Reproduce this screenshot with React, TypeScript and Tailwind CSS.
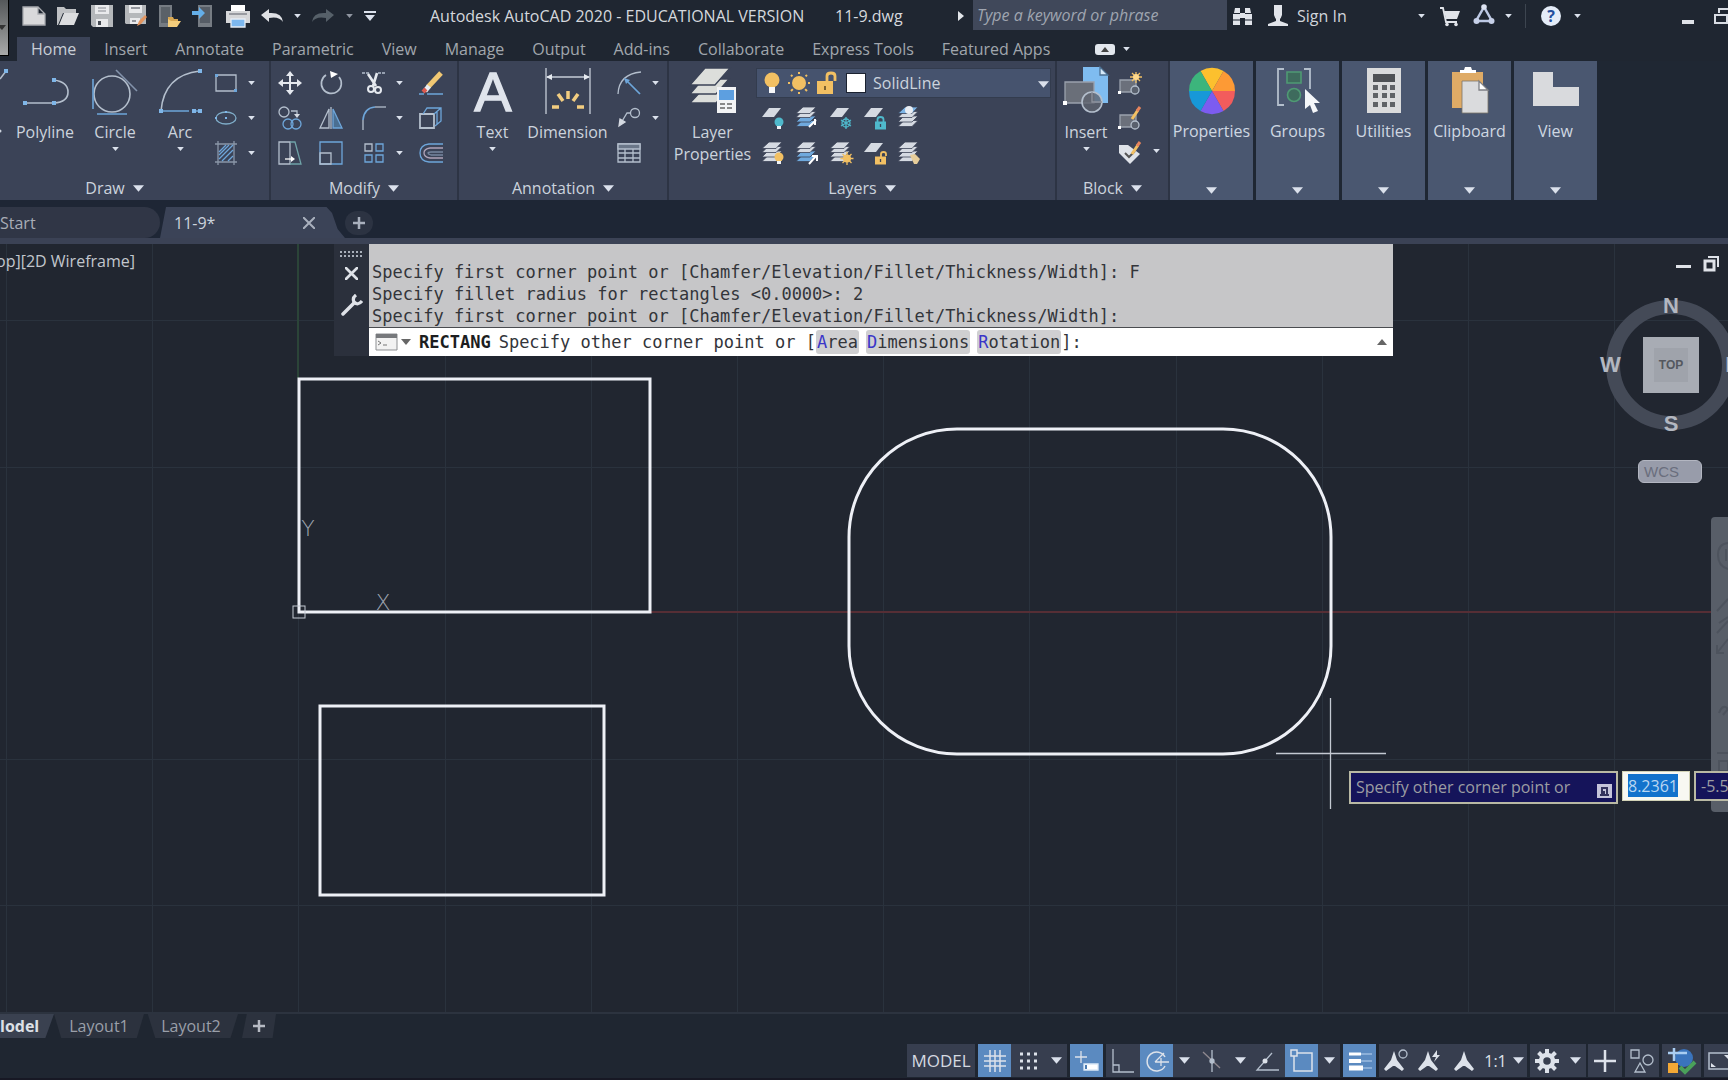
import type { ReactNode } from 'react';
import { clsx } from 'clsx';

const LINE = '#b4bfcd';
const BLUE = '#6ea6da';
const PALE = '#d5dae2';
const GOLD = '#f2c063';
const TEAL = '#4fb9cc';

function Caret({ big }: { big?: boolean }) {
    return (
        <svg viewBox="0 0 10 6" className={clsx('shrink-0', big ? 'w-[11px] h-[7px]' : 'w-[7px] h-[4px]')}>
            <path d="M0 0H10L5 6Z" fill="#dbe1ec" />
        </svg>
    );
}

function Icon({ children, size = 24 }: { children: ReactNode; size?: number }) {
    return (
        <svg
            viewBox={`0 0 ${size} ${size}`}
            width={size}
            height={size}
            fill="none"
            stroke={LINE}
            strokeWidth="1.3"
            className="shrink-0 overflow-visible"
        >
            {children}
        </svg>
    );
}

function IconButton({ label, className, children }: { label: string; className?: string; children: ReactNode }) {
    return (
        <button aria-label={label} className={clsx('flex items-center justify-center shrink-0', className)}>
            {children}
        </button>
    );
}

/* Stack of layer sheets, shared by the layer tools */
function Sheets({ top = PALE, bottom = PALE }: { top?: string; bottom?: string }) {
    return (
        <g stroke="#3b4357" strokeWidth="0.8">
            <path d="M1 20.500L7 14.500H21L15 20.500Z" fill={bottom} />
            <path d="M1 16L7 10H21L15 16Z" fill={bottom} />
            <path d="M1 11.500L7 5.500H21L15 11.500Z" fill={PALE} />
            <path d="M1 7.500L8 1H21L15 7.500Z" fill={top} />
        </g>
    );
}

const SingleSheet = () => <path d="M1 11L8 2H20L13 11Z" fill={PALE} stroke="none" />;

const Bulb = ({ color = GOLD }: { color?: string }) => (
    <g stroke="none">
        <circle cx="18" cy="16" r="4.500" fill={color} />
        <rect x="16" y="20" width="4" height="3" fill="#eef1f5" />
    </g>
);

const Padlock = ({ color, open }: { color: string; open?: boolean }) => (
    <g>
        <path d={open ? 'M18 16V13Q18 11 20.500 11T23 13V15' : 'M14.500 16V13.500Q14.500 11 17.500 11T20.500 13.500V16'} stroke={color} strokeWidth="1.800" />
        <rect x="12" y="15.500" width="11" height="8" fill={color} stroke="none" />
        <path d="M17.500 18V21" stroke="#3b4357" />
    </g>
);

const Sun = () => (
    <g>
        <path d="M18 11V24M11.500 17.500H24.500M13.500 13L22.500 22M22.500 13L13.500 22" stroke={GOLD} />
        <circle cx="18" cy="17.500" r="4" fill={GOLD} stroke="none" />
    </g>
);

const Pencil = () => (
    <g strokeWidth="3">
        <path d="M14 13L20 4" stroke={GOLD} />
        <path d="M19 5L22 1" stroke="#e8845c" />
    </g>
);

/* ---- Title bar ---- */

const quickAccess: { label: string; icon: ReactNode }[] = [
    { label: 'New', icon: <path d="M1 3H16L23 10V21H1Z M16 3V10H23" fill="#d9d9db" stroke="#a9abb0" /> },
    {
        label: 'Open',
        icon: (
            <g stroke="none">
                <path d="M1 3H8L10 5H20V9H7L2 21H1Z" fill="#bfc1c4" />
                <path d="M8 9H23L18 21H3Z" fill="#dcdddf" />
            </g>
        ),
    },
    {
        label: 'Save',
        icon: (
            <g stroke="none">
                <path d="M1 1H23V23H3L1 21Z" fill="#b5b8bb" />
                <path d="M5 1H19V10H5ZM6 15H18V23H6Z" fill="#e9eaec" />
                <path d="M8 4H16M8 7H16" stroke="#a8abb0" />
                <path d="M8 17H11V21H8Z" fill="#454a52" />
            </g>
        ),
    },
    {
        label: 'Save As',
        icon: (
            <g stroke="none">
                <path d="M1 1H22V20H2L1 19Z" fill="#b5b8bb" />
                <path d="M5 1H18V9H5ZM6 14H16V20H6Z" fill="#e9eaec" />
                <path d="M7 4H16M8 17H12" stroke="#777b82" />
                <path d="M13 22L15 17L21 11L23 13L17 20Z" fill="#e3955f" />
            </g>
        ),
    },
    {
        label: 'Open from Web & Mobile',
        icon: (
            <g stroke="none">
                <path d="M1 1H14V23H1Z" fill="#767c83" />
                <path d="M3 3H12V19H3Z" fill="#5a6168" />
                <path d="M10 13H15L16 15H20V17H10Z" fill="#d9a852" />
                <path d="M13 17H23L19 23H10V15Z" fill="#f4cd7c" />
            </g>
        ),
    },
    {
        label: 'Save to Web & Mobile',
        icon: (
            <g stroke="none">
                <path d="M6 1H20V23H6Z" fill="#767c83" />
                <path d="M8 3H18V19H8Z" fill="#565d66" />
                <path d="M0 7H7V3L13 9L7 15V11H0Z" fill="#64aee8" />
            </g>
        ),
    },
    {
        label: 'Plot',
        icon: (
            <g stroke="none">
                <path d="M5 1H19V7H5Z" fill="#fff" />
                <path d="M0 7H24V19H0Z" fill="#d6d7d9" />
                <path d="M3 10H21" stroke="#777b82" />
                <path d="M5 15H19V23H5Z" fill="#7db8ef" stroke="#e6edf5" />
            </g>
        ),
    },
];

function TitleBar() {
    return (
        <div className="flex items-center h-[31px]">
            <div className="flex items-center pl-2 shrink-0">
                {quickAccess.map((q) => (
                    <IconButton key={q.label} label={q.label} className="w-[34px] h-7">
                        <Icon>{q.icon}</Icon>
                    </IconButton>
                ))}
                <IconButton label="Undo" className="w-[34px]">
                    <Icon><path d="M1 11L9 5V9Q22 8 23 18Q19 12 9 14V18Z" fill="#dfe1e5" stroke="none" /></Icon>
                </IconButton>
                <IconButton label="Undo history" className="w-4 h-7"><Caret /></IconButton>
                <IconButton label="Redo" className="w-9">
                    <Icon><path d="M23 11L15 5V9Q2 8 1 18Q5 12 15 14V18Z" fill="#566069" stroke="none" /></Icon>
                </IconButton>
                <IconButton label="Redo history" className="w-4 h-7 opacity-60"><Caret /></IconButton>
                <IconButton label="Customize" className="w-[26px]">
                    <svg viewBox="0 0 12 10" className="w-3 h-[10px]"><path d="M0 0H12V2H0ZM1 4H11L6 10Z" fill="#dbe1ec" /></svg>
                </IconButton>
            </div>
            <h1 className="flex ml-[47px] w-[524px] shrink-0 text-[#d5d8dd]">
                <span className="w-[405px]">Autodesk AutoCAD 2020 - EDUCATIONAL VERSION</span>
                <span>11-9.dwg</span>
            </h1>
            <div className="w-[19px] shrink-0 pl-1">
                <svg viewBox="0 0 6 10" className="w-[6px] h-[10px]"><path d="M0 0L6 5L0 10Z" fill="#e2e5ea" /></svg>
            </div>
            <input
                aria-label="Search"
                placeholder="Type a keyword or phrase"
                className="w-[254px] h-[30px] self-start shrink-0 px-1 bg-[#40485a] text-base italic placeholder:text-[#9fa5b0]"
            />
            <IconButton label="Find" className="w-8">
                <Icon>
                    <path d="M2 10H9V21H2ZM14 10H21V21H14ZM4 4H9V9H3ZM14 4H19L20 9H14ZM9 9H14V14H9Z" fill="#e1e4ea" stroke="none" />
                    <path d="M2 16H9M14 16H21" stroke="#59606b" />
                </Icon>
            </IconButton>
            <button className="flex items-center w-[152px] shrink-0 text-[#d0d4db]">
                <span className="w-[38px] flex justify-center">
                    <Icon>
                        <path d="M8 1H16V11Q15 14 14 15V17L22 20V22H2V20L10 17V15Q9 14 8 11Z" fill="#e1e4ea" stroke="none" />
                    </Icon>
                </span>
                Sign In
            </button>
            <IconButton label="Account" className="w-5 h-7"><Caret /></IconButton>
            <IconButton label="App Store" className="w-[38px]">
                <Icon>
                    <path d="M6 7H22L19 15H8Z" fill="#e1e4ea" stroke="none" />
                    <path d="M2 4H5L8 18H19" stroke="#e1e4ea" strokeWidth="1.800" />
                    <circle cx="9" cy="20.500" r="1.800" fill="#e1e4ea" stroke="none" />
                    <circle cx="18" cy="20.500" r="1.800" fill="#e1e4ea" stroke="none" />
                </Icon>
            </IconButton>
            <IconButton label="Stay Connected" className="w-[30px]">
                <Icon>
                    <g transform="translate(0 -2)">
                        <path d="M12 5L4 19H20Z" stroke="#bcc8e4" strokeWidth="2.500" />
                        <circle cx="12" cy="5" r="2.800" fill="#dde3f2" stroke="none" />
                        <circle cx="4.500" cy="19" r="3" fill="#c6d0e8" stroke="none" />
                        <circle cx="19.500" cy="19" r="3" fill="#c6d0e8" stroke="none" />
                    </g>
                </Icon>
            </IconButton>
            <IconButton label="Connect options" className="w-[18px] h-7"><Caret /></IconButton>
            <div className="w-px h-6 mx-2 shrink-0 bg-[#3d4550]" />
            <IconButton label="Help" className="w-[34px]">
                <span className="flex items-center justify-center size-5 rounded-full bg-[#e4ecf8] text-[#244f9e] text-base leading-5 font-bold">?</span>
            </IconButton>
            <IconButton label="Help options" className="w-[18px] h-7"><Caret /></IconButton>
            <div className="flex items-center ml-auto">
                <IconButton label="Minimize" className="w-[50px] h-7">
                    <span className="w-3 h-1 mt-3 bg-[#dfe2e8]" />
                </IconButton>
                <button aria-label="Restore" className="flex items-center w-[15px] h-7 shrink-0 overflow-hidden">
                    <svg viewBox="0 0 20 18" width="20" height="18" fill="none" stroke="#d8dce3" strokeWidth="2" className="shrink-0">
                        <path d="M2 8H14V16H2ZM6 6V2H19V11H15" />
                    </svg>
                </button>
            </div>
        </div>
    );
}

const ribbonTabs = [
    'Home', 'Insert', 'Annotate', 'Parametric', 'View', 'Manage', 'Output',
    'Add-ins', 'Collaborate', 'Express Tools', 'Featured Apps',
];

function Header() {
    return (
        <header className="flex">
            <button aria-label="Application menu" className="w-[9px] h-14 shrink-0 flex items-center bg-linear-to-b from-[#55585a] to-[#a9aaa9] border-r border-b border-black">
                <svg viewBox="0 0 6 5" className="w-[6px] h-[5px]"><path d="M0 0H6L2 5L0 3Z" fill="#333" /></svg>
            </button>
            <div className="flex-1 min-w-0">
                <TitleBar />
                <nav className="flex h-6 mt-[6px] pl-2">
                    {ribbonTabs.map((tab, i) => (
                        <button
                            key={tab}
                            className={clsx(
                                'px-[14px] leading-6 whitespace-nowrap',
                                i === 0 ? 'bg-[#3b4357] text-[#c9ced6]' : 'text-[#a1a6ad]',
                            )}
                        >
                            {tab}
                        </button>
                    ))}
                    <button aria-label="Minimize ribbon" className="flex items-center gap-2 ml-[31px]">
                        <span className="flex items-center justify-center w-5 h-[11px] rounded-[3px] bg-[#e3e7ee]">
                            <svg viewBox="0 0 8 5" className="w-2 h-[5px]"><path d="M0 5H8L4 0Z" fill="#444" /></svg>
                        </span>
                        <Caret />
                    </button>
                </nav>
            </div>
        </header>
    );
}

/* ---- Ribbon ---- */

function Panel({ title, className, titleClass, children }: { title: string; className: string; titleClass?: string; children: ReactNode }) {
    return (
        <section className={clsx('flex flex-col shrink-0 h-[139px] bg-[#3b4357] border-r-2 border-[#2d3444]', className)}>
            <div className="flex h-[113px]">{children}</div>
            <button className={clsx('flex items-center justify-center gap-2 h-[26px] pt-[2px] text-[#ccd3dd]', titleClass)}>
                {title}
                <Caret big />
            </button>
        </section>
    );
}

function BigButton({ label, className, menu, icon }: { label: string; className: string; menu?: boolean; icon: ReactNode }) {
    return (
        <button className={clsx('flex flex-col items-center shrink-0 pt-[6px] text-[#ccd3dd]', className)}>
            <Icon size={48}>{icon}</Icon>
            <span className="mt-[6px] leading-[22px]">{label}</span>
            {menu && <span className="flex items-center h-3"><Caret /></span>}
        </button>
    );
}

/* Column of three small tools */
function Tools({ className, items }: { className: string; items: [string, ReactNode][] }) {
    return (
        <div className={clsx('flex flex-col shrink-0 pt-[4px]', className)}>
            {items.map(([label, icon]) => (
                <IconButton key={label} label={label} className="h-[35px] w-full">
                    {icon}
                </IconButton>
            ))}
        </div>
    );
}

const dot = (x: number, y: number) => <rect x={x - 2} y={y - 2} width="4" height="4" fill="#7fb6e8" stroke="none" />;

function DrawPanel() {
    return (
        <Panel title="Draw" className="w-[271px]" titleClass="pr-10">
            <button aria-label="Line" className="w-[10px] shrink-0 pt-[6px] flex items-start overflow-hidden">
                <svg viewBox="0 0 10 70" width="10" height="70" fill="none">
                    <path d="M0 12L6 4" stroke={LINE} strokeWidth="1.500" />
                    {dot(6, 4)}
                    <circle cx="0" cy="64" r="1.500" fill="#ccd3dd" />
                </svg>
            </button>
            <BigButton label="Polyline" className="w-[70px]" icon={
                <>
                    <path d="M4 36H33Q47 35 47 25T33 13" strokeWidth="1.600" />
                    {dot(4, 36)}{dot(33, 36)}{dot(33, 13)}
                </>
            } />
            <BigButton label="Circle" className="w-[70px]" menu icon={
                <>
                    <circle cx="21" cy="27" r="18" strokeWidth="1.600" />
                    <path d="M2 12V42M6 47H36" stroke={BLUE} strokeWidth="1.600" />
                    <path d="M25 3L46 24" stroke="#8393ab" strokeWidth="1.600" />
                </>
            } />
            <BigButton label="Arc" className="w-[60px]" menu icon={
                <>
                    <path d="M5 44Q8 8 44 4" strokeWidth="1.600" />
                    <path d="M5 44H44" stroke={BLUE} strokeDasharray="28 3" />
                    {dot(5, 44)}{dot(44, 4)}{dot(44, 44)}{dot(38, 44)}
                </>
            } />
            <Tools className="w-[31px]" items={[
                ['Rectangle', <Icon><path d="M2 4H22V20H2Z" /><path d="M1 3H4V6H1ZM20 18H23V21H20Z" fill={BLUE} stroke="none" /></Icon>],
                ['Ellipse', <Icon><ellipse cx="12" cy="12" rx="10" ry="6" stroke="#7fadc9" /><path d="M11 5H13V7H11ZM11 11H13V13H11ZM1 11H3V13H1Z" fill="#7fb6e8" stroke="none" /></Icon>],
                ['Hatch', <Icon><path d="M4 0V24M20 0V24M1 3H23M1 21H23" stroke="#8a96a8" /><path d="M5 11L12 4M5 18L19 4M8 20L19 9M14 20L19 15M5 14L15 4" stroke={BLUE} /></Icon>],
            ]} />
            <Tools className="w-[20px]" items={[['Rectangle menu', <Caret />], ['Ellipse menu', <Caret />], ['Hatch menu', <Caret />]]} />
        </Panel>
    );
}

function ModifyPanel() {
    return (
        <Panel title="Modify" className="w-[188px]">
            <Tools className="w-[38px]" items={[
                ['Move', <Icon>
                    <path d="M12 3V21M3 12H21" stroke="#e5e9ef" strokeWidth="2" />
                    <path d="M12 0L16 5H8ZM12 24L16 19H8ZM0 12L5 8V16ZM24 12L19 8V16Z" fill="#e5e9ef" stroke="none" />
                </Icon>],
                ['Copy', <Icon>
                    <circle cx="6" cy="6" r="5" />
                    <path d="M13 5H19V9" /><path d="M16 8H22L19 12Z" fill={PALE} stroke="none" />
                    <circle cx="10" cy="18" r="5" stroke={BLUE} /><circle cx="18" cy="18" r="5" stroke={BLUE} />
                </Icon>],
                ['Stretch', <Icon>
                    <path d="M1 1H12V23H1Z" /><path d="M12 1H17L23 23H12" stroke="#6fa3a8" />
                    <path d="M7 18H14" stroke="#fff" /><path d="M13 15L17 18L13 21Z" fill="#fff" stroke="none" />
                </Icon>],
            ]} />
            <Tools className="w-[44px]" items={[
                ['Rotate', <Icon>
                    <path d="M7 4A10 10 0 1 0 20 6" strokeWidth="1.700" /><path d="M11 0L19 3L12 7Z" fill="#fff" stroke="none" />
                </Icon>],
                ['Mirror', <Icon>
                    <path d="M10 3L1 22H10Z" /><path d="M14 3L23 22H14Z" stroke={BLUE} fill="#4a6f92" /><path d="M12 1V23" />
                </Icon>],
                ['Scale', <Icon><path d="M1 1H23V23H1Z" stroke={BLUE} /><path d="M1 12H12V23H1Z" /></Icon>],
            ]} />
            <Tools className="w-[41px]" items={[
                ['Trim', <Icon>
                    <path d="M0 2H7M16 2H23" strokeDasharray="3 1" /><path d="M6 3L14 15M15 2L11 15" stroke="#e5e9ef" strokeWidth="2.600" />
                    <circle cx="9" cy="18" r="3" stroke="#e5e9ef" strokeWidth="2" /><circle cx="16" cy="19" r="3" stroke="#e5e9ef" strokeWidth="2" />
                </Icon>],
                ['Fillet', <Icon><path d="M1 24V14" /><path d="M1 14Q2 2 13 1" stroke={BLUE} strokeWidth="1.700" /><path d="M13 1H24" /></Icon>],
                ['Array', <Icon>
                    <path d="M3 3H10V10H3Z" />
                    <path d="M14 3H21V10H14ZM3 14H10V21H3ZM14 14H21V21H14Z" stroke={BLUE} />
                </Icon>],
            ]} />
            <Tools className="w-[11px]" items={[['Trim menu', <Caret />], ['Fillet menu', <Caret />], ['Array menu', <Caret />]]} />
            <Tools className="w-[51px]" items={[
                ['Erase', <Icon>
                    <path d="M9 16L22 2" stroke="#f1c873" strokeWidth="5" /><path d="M6 20L10 15" stroke="#e9edf1" strokeWidth="5" />
                    <path d="M4 21L7 18" stroke="#dc5a4f" strokeWidth="4" /><path d="M0 23H24" stroke={BLUE} strokeDasharray="5 3 16" />
                </Icon>],
                ['Explode', <Icon>
                    <path d="M1 8H15V22H1Z" strokeWidth="1.800" /><path d="M4 8L8 2H22V15L16 20M15 8L22 2M18 6V18" stroke={BLUE} />
                </Icon>],
                ['Offset', <Icon>
                    <path d="M24 3H10Q1 4 1 12T10 21H24" stroke={BLUE} /><path d="M24 7H11Q5 8 5 12T11 17H24" stroke="#b0a3b8" /><path d="M24 11H12Q9 11 9 12T12 14H24" stroke="#7787a0" />
                </Icon>],
            ]} />
        </Panel>
    );
}

function AnnotationPanel() {
    return (
        <Panel title="Annotation" className="w-[210px]">
            <BigButton label="Text" className="w-[67px]" menu icon={
                <text x="24" y="44" textAnchor="middle" fontSize="56" fontFamily="Liberation Sans" fill="#dfe4ec" stroke="#dfe4ec">A</text>
            } />
            <BigButton label="Dimension" className="w-[83px]" icon={
                <>
                    <path d="M2 1V47M46 1V47M3 10H45" stroke="#c6cdd8" />
                    <path d="M2 10L8 7V13ZM46 10L40 7V13Z" fill="#e5e9ef" stroke="none" />
                    <path d="M24 24V32M14 27L19 34M34 27L29 34M8 40H15M33 40H40" stroke="#f2cd80" strokeWidth="3.500" />
                </>
            } />
            <Tools className="w-[40px]" items={[
                ['Radius', <Icon><path d="M1 23Q2 3 24 1" /><path d="M9 9L23 23" stroke={BLUE} strokeWidth="1.700" /><path d="M7 7L13 9L9 13Z" fill={BLUE} stroke="none" /></Icon>],
                ['Leader', <Icon><circle cx="18" cy="7" r="4.500" /><path d="M13 7H10L4 17" /><path d="M2 20L3 13L8 16Z" fill={PALE} stroke={PALE} /></Icon>],
                ['Table', <Icon>
                    <path d="M1 3H23V21H1ZM1 12H23M1 17H23M8 8V21M16 8V21" /><path d="M1 3H23V8H1Z" fill="#6b7789" />
                </Icon>],
            ]} />
            <div className="flex flex-col w-3 pt-[4px]">
                <IconButton label="Radius menu" className="h-[35px]"><Caret /></IconButton>
                <IconButton label="Leader menu" className="h-[35px]"><Caret /></IconButton>
            </div>
        </Panel>
    );
}

const layerTools: [string, ReactNode][] = [
    ['Layer Off', <><SingleSheet /><Bulb color={TEAL} /></>],
    ['Isolate', <><Sheets bottom="#6fa9dd" /><path d="M14 21L21 14M20 13V19" stroke="#fff" strokeWidth="2" /></>],
    ['Freeze', <><SingleSheet /><path d="M17 11V23M12 14L22 20M22 14L12 20" stroke={TEAL} /><circle cx="17" cy="17" r="4" stroke={TEAL} /></>],
    ['Lock', <><SingleSheet /><Padlock color={TEAL} /></>],
    ['Make Current', <><Sheets top="#7db5e6" /><circle cx="12" cy="4" r="4" fill="#e9edf3" stroke="none" /></>],
    ['Turn All On', <><Sheets /><Bulb /></>],
    ['Unisolate', <><Sheets bottom="#6fa9dd" /><path d="M14 23L21 15M17 15H22V20" stroke="#fff" strokeWidth="2" /></>],
    ['Thaw All', <><Sheets /><Sun /></>],
    ['Unlock', <><SingleSheet /><Padlock color={GOLD} open /></>],
    ['Match Layer', <><Sheets /><path d="M13 14L18 13L23 18L20 23H17Z" fill="#e6cd9a" stroke="none" /></>],
];

function LayersPanel() {
    return (
        <Panel title="Layers" className="w-[388px]">
            <button className="flex flex-col items-center w-[87px] shrink-0 pt-[6px] leading-[22px] text-[#ccd3dd]">
                <Icon size={48}>
                    <g stroke="#3b4357">
                        <path d="M1 36L14 22H40L27 36Z" fill="#dcdedb" />
                        <path d="M1 27L14 12H40L27 27Z" fill="#dcdedb" />
                        <path d="M1 18L16 1H41L26 18Z" fill="#dcdedb" />
                    </g>
                    <path d="M28 20H47V46H28Z" fill="#f2f3f5" stroke="none" />
                    <path d="M30 23H45V33H30Z" fill="#5d9fe0" stroke="none" />
                    <path d="M31 37H44M31 41H44" stroke="#666" strokeDasharray="5 2" />
                </Icon>
                <span className="mt-[6px]">Layer</span>
                <span>Properties</span>
            </button>
            <div className="flex-1 pt-[7px]">
                <div className="relative flex items-center w-[295px] h-[30px] bg-[#46536e] border border-[#333c4e]">
                    <Icon size={28}>
                        <circle cx="15" cy="11" r="7.500" fill={GOLD} stroke="none" /><path d="M12 18H18V24H12Z" fill="#f6f7f9" stroke="none" />
                    </Icon>
                    <Icon size={28}>
                        <circle cx="14" cy="14" r="7" fill={GOLD} stroke="none" />
                        <path d="M14 3V25M3 14H25M6 6L22 22M22 6L6 22" stroke={GOLD} strokeWidth="2" strokeDasharray="2 18 3" />
                    </Icon>
                    <Icon size={28}>
                        <path d="M14 14V7Q14 4 18 4T22 7V12" stroke={GOLD} strokeWidth="2.800" />
                        <path d="M4 12H20V25H4Z" fill={GOLD} stroke="none" /><path d="M12 17V21" stroke="#7d6230" strokeWidth="2" />
                    </Icon>
                    <span className="size-5 ml-[5px] mr-[7px] bg-white border border-[#1b2230]" />
                    <select aria-label="Layer" className="flex-1 h-7 appearance-none bg-transparent text-[#ccd3dd]">
                        <option>SolidLine</option>
                    </select>
                    <span className="absolute right-px top-3 pointer-events-none flex"><Caret big /></span>
                </div>
                <div className="grid grid-cols-[repeat(5,34px)] pt-[2px]">
                    {layerTools.map(([label, icon]) => (
                        <IconButton key={label} label={label} className="h-[35px]">
                            <Icon>{icon}</Icon>
                        </IconButton>
                    ))}
                </div>
            </div>
        </Panel>
    );
}

const BlockBase = () => (
    <>
        <path d="M2 9H18V21H2Z" fill="#6b707b" stroke="#9aa1ad" />
        <circle cx="17" cy="19" r="4" fill="#59606d" />
        <rect x="0" y="20" width="3" height="3" fill="#fff" stroke="none" />
    </>
);

function BlockPanel() {
    return (
        <Panel title="Block" className="w-[113px]">
            <BigButton label="Insert" className="w-[58px]" menu icon={
                <>
                    <path d="M21 0H38L46 8V36H21Z" fill="#7fbcf0" stroke="none" /><path d="M38 0V8H46Z" fill="#d6eafa" stroke="#4b6f91" />
                    <path d="M3 15H32V36H3Z" fill="#6a6f79" stroke="#9aa1ad" />
                    <circle cx="30" cy="35" r="10" fill="#5f646f" fillOpacity="0.800" strokeWidth="1.600" /><path d="M30 25V35H40" stroke="#8e939d" />
                    <rect x="1" y="34" width="4" height="4" fill="#fff" stroke="none" />
                </>
            } />
            <Tools className="w-[29px]" items={[
                ['Create Block', <Icon><BlockBase /><path d="M18 1V12M12 6H24M14 2L22 10M22 2L14 10" stroke={GOLD} /><circle cx="18" cy="6" r="3" fill="#ffd98c" stroke="none" /></Icon>],
                ['Edit Block', <Icon><BlockBase /><Pencil /></Icon>],
                ['Edit Attributes', <Icon><path d="M1 4H10L22 13L12 23L1 12Z" fill="#dfe3e9" stroke="none" /><path d="M7 12L11 16L17 10" stroke="#555" strokeWidth="2" /><Pencil /></Icon>],
            ]} />
            <div className="flex items-end w-[24px] pb-[17px]">
                <IconButton label="Attributes menu" className="w-6 h-3"><Caret /></IconButton>
            </div>
        </Panel>
    );
}

const wheel = ['#fcc02e', '#fd9a35', '#f25c5c', '#7c5cf0', '#1798d8', '#3cb57c'];

const collapsed: { label: string; icon: ReactNode }[] = [
    {
        label: 'Properties',
        icon: wheel.map((fill, i) => (
            <path key={fill} d="M24 24L12.500 4.080A23 23 0 0 1 35.500 4.080Z" fill={fill} stroke="none" transform={`rotate(${i * 60} 24 24)`} />
        )),
    },
    {
        label: 'Groups',
        icon: (
            <>
                <path d="M10 2H4V38H10M30 2H36V22" strokeWidth="1.800" />
                <path d="M13 5H27V16H13Z" fill="#3e6b5d" stroke="#4f9a74" strokeWidth="1.600" />
                <circle cx="20" cy="28" r="6.500" fill="#3e6b5d" stroke="#4f9a74" strokeWidth="1.600" />
                <path d="M31 22L46 36H40L44 44L39 46L36 38L31 42Z" fill="#f4f6f9" stroke="none" />
            </>
        ),
    },
    {
        label: 'Utilities',
        icon: (
            <g stroke="none">
                <path d="M7 1H41V46H7Z" fill="#dadbdc" />
                <path d="M13 7H35V15H13Z" fill="#4e5155" />
                <path d="M13 18H18V23H13ZM22 18H27V23H22ZM30 18H35V23H30ZM13 26H18V31H13ZM22 26H27V31H22ZM30 26H35V31H30ZM13 35H18V40H13ZM22 35H27V40H22ZM30 35H35V40H30Z" fill="#5f6266" />
            </g>
        ),
    },
    {
        label: 'Clipboard',
        icon: (
            <g stroke="none">
                <path d="M6 5H37V41H6Z" fill="#dfab66" />
                <path d="M14 6V3H18L19 0H25L26 3H30V6Z" fill="#fff" />
                <path d="M16 14H33L42 23V46H16Z" fill="#dadbdd" stroke="#7b7567" strokeWidth="0.800" /><path d="M33 14V23H42Z" fill="#fff" stroke="#7d7f84" />
            </g>
        ),
    },
    { label: 'View', icon: <path d="M1 5H21V20H47V39H1Z" fill="#d9dadd" stroke="none" /> },
];

function Ribbon() {
    return (
        <div className="flex bg-[#1f2733] overflow-hidden">
            <DrawPanel />
            <ModifyPanel />
            <AnnotationPanel />
            <LayersPanel />
            <BlockPanel />
            <div className="flex gap-[3px]">
                {collapsed.map((p) => (
                    <button key={p.label} className="flex flex-col items-center w-[83px] h-[139px] pt-[6px] pb-[6px] bg-[#4a5770] text-[#cfd7e2]">
                        <Icon size={48}>{p.icon}</Icon>
                        <span className="mt-[5px] leading-[22px]">{p.label}</span>
                        <span className="mt-auto flex"><Caret big /></span>
                    </button>
                ))}
            </div>
        </div>
    );
}

function FileTabs() {
    return (
        <div className="bg-[#1e2635] pt-[7px] border-b-[6px] border-[#3b4255]">
            <div className="flex items-start h-[31px]">
                <button className="w-[160px] h-[31px] text-left bg-[#303646] text-[#a9adb6] rounded-tr-2xl rounded-br-2xl">Start</button>
                <div className="flex items-center justify-between w-[185px] h-[31px] pl-[14px] pr-7 bg-[#3b4357] text-[#ccd3dd] [clip-path:polygon(6px_0,90%_0,93%_6px,96%_22px,100%_100%,0_100%)]">
                    <button>11-9*</button>
                    <IconButton label="Close drawing" className="size-4">
                        <svg viewBox="0 0 12 12" width="12" height="12" stroke="#a9b0bd" strokeWidth="2"><path d="M0 0L12 12M12 0L0 12" /></svg>
                    </IconButton>
                </div>
                <IconButton label="New drawing" className="w-7 h-6 mt-1 rounded-xl bg-[#2c3342]">
                    <svg viewBox="0 0 12 12" width="12" height="12" stroke="#a9b0bd" strokeWidth="2.500"><path d="M6 0V12M0 6H12" /></svg>
                </IconButton>
            </div>
        </div>
    );
}

/* ---- Drawing area ---- */

const gridX = Array.from({ length: 12 }, (_, i) => 6 + Math.round(i * 146.2));
const gridY = [76, 223, 515, 661];

function Drawing() {
    return (
        <svg className="absolute inset-0 w-full h-full" fill="none">
            <g stroke="#2a323d" shapeRendering="crispEdges">
                {gridX.map((x) => <line key={x} x1={x} x2={x} y1="0" y2="100%" />)}
                {gridY.map((y) => <line key={y} x1="0" x2="100%" y1={y} y2={y} />)}
            </g>
            <line x1="298" x2="298" y1="0" y2="134" stroke="#2b4438" strokeWidth="2" />
            <line x1="650" x2="100%" y1="368" y2="368" stroke="#562e35" strokeWidth="2" />
            <g stroke="#eef0f6" strokeWidth="3">
                <rect x="299" y="135" width="351" height="233" />
                <rect x="320" y="462" width="284" height="189" />
                <rect x="849" y="185" width="482" height="325" rx="108" />
            </g>
            <g stroke="#c4c9d2">
                <rect x="293" y="362" width="12" height="12" />
                <path d="M1330.500 454V565M1276 509.500H1386" strokeWidth="1.300" />
            </g>
            <g fill="#9da3ae" fontSize="22" fontWeight="200" textAnchor="middle" fontFamily="DejaVu Sans">
                <text x="308" y="292">Y</text>
                <text x="383" y="366">X</text>
            </g>
        </svg>
    );
}

function CommandLine() {
    return (
        <div className="absolute left-[334px] top-0 flex w-[1059px] h-[112px] font-['DejaVu_Sans_Mono',monospace] text-[17px] text-[#33353a]">
            <div className="flex flex-col items-center w-[35px] pt-[6px] bg-[#2b303c]">
                <div className="w-[25px] h-[8px] bg-[radial-gradient(#a9afba_1px,transparent_1px)] bg-[size:4px_4px]" />
                <IconButton label="Close command line" className="size-5 mt-[5px]">
                    <svg viewBox="0 0 12 12" width="13" height="13" stroke="#dfe2e8" strokeWidth="2.500"><path d="M0 0L12 12M12 0L0 12" /></svg>
                </IconButton>
                <IconButton label="Customize command line" className="size-6 mt-[10px]">
                    <svg viewBox="0 0 22 22" width="22" height="22" fill="none" stroke="#dfe2e8">
                        <path d="M2 20L13 9" strokeWidth="3.500" strokeLinecap="round" />
                        <path d="M15 1Q11 4 13 8Q17 12 21 7" strokeWidth="3.200" />
                    </svg>
                </IconButton>
            </div>
            <div className="flex-1 flex flex-col">
                <div className="h-[84px] pt-[17px] pl-[3px] bg-[#c6c6c8] border-b border-[#4a4c50] leading-[22px] whitespace-pre">
                    <p>Specify first corner point or [Chamfer/Elevation/Fillet/Thickness/Width]: F</p>
                    <p>Specify fillet radius for rectangles &lt;0.0000&gt;: 2</p>
                    <p>Specify first corner point or [Chamfer/Elevation/Fillet/Thickness/Width]:</p>
                </div>
                <div className="flex items-center h-7 pl-[6px] pr-[6px] bg-white whitespace-pre">
                    <svg viewBox="0 0 23 18" width="23" height="18" fill="none">
                        <path d="M1 1H22V17H1Z" fill="#f2f2f2" stroke="#8d8f92" /><path d="M1 1H22V5H1Z" fill="#77797c" />
                        <path d="M3 8L6 10L3 12M8 12H12" stroke="#777" />
                    </svg>
                    <svg viewBox="0 0 10 6" className="w-[10px] h-[6px] mx-[3px]"><path d="M0 0H10L5 6Z" fill="#666" /></svg>
                    <b className="ml-[5px] mr-2 text-[#1c1d20]">RECTANG</b>
                    Specify other corner point or [
                    <span className="flex gap-[7px]">
                        {['Area', 'Dimensions', 'Rotation'].map((option) => (
                            <button key={option} className="h-6 px-px rounded-[3px] bg-[#cfcfd1]">
                                <span className="text-[#3a36c8]">{option[0]}</span>
                                {option.slice(1)}
                            </button>
                        ))}
                    </span>
                    ]:
                    <svg viewBox="0 0 10 6" className="w-[10px] h-[6px] ml-auto"><path d="M0 6H10L5 0Z" fill="#666" /></svg>
                </div>
            </div>
        </div>
    );
}

function ViewCube() {
    return (
        <>
            <div className="absolute right-0 top-3 flex gap-3 pr-[9px]">
                <IconButton label="Minimize viewport" className="w-4 h-5"><span className="w-[15px] h-[3px] bg-[#dfe2e8]" /></IconButton>
                <IconButton label="Restore viewport" className="w-4 h-4">
                    <svg viewBox="0 0 16 16" width="16" height="16" fill="none" stroke="#dfe2e8">
                        <path d="M2 5H11V14H2Z" strokeWidth="3" /><path d="M5 1H15V11" strokeWidth="2" />
                    </svg>
                </IconButton>
            </div>
            <div className="absolute right-[-16px] top-[48px] flex flex-col items-center w-[146px]">
                <div className="relative flex items-center justify-center size-[146px] font-['Liberation_Sans',sans-serif] font-bold text-[22px] leading-5 text-[#b3b7c0]">
                    <div className="absolute inset-2 rounded-full border-[14px] border-[#444a57]" />
                    <span className="absolute top-1">N</span>
                    <span className="absolute bottom-1">S</span>
                    <span className="absolute left-[2px]">W</span>
                    <span className="absolute right-1">E</span>
                    <button className="relative flex items-center justify-center size-14 bg-[#a8acb4]">
                        <span className="flex items-center justify-center size-[34px] bg-[#9fa3ab] text-xs text-[#54585f]">TOP</span>
                    </button>
                </div>
                <button className="w-16 h-[23px] mt-[22px] mr-[2px] pl-[5px] text-left rounded-md bg-[#989caa] border border-[#b3b6c1] font-['Liberation_Sans',sans-serif] text-[15px] leading-5 text-[#6a6e7d]">WCS</button>
            </div>
            <div className="absolute right-0 top-[273px] w-[17px] h-[295px] pt-6 rounded-l bg-[#585e68] overflow-hidden">
                <svg viewBox="0 0 17 250" width="17" height="250" fill="none" stroke="#4d535d" strokeWidth="2">
                    <path d="M17 2Q7 3 7 14T17 28M15 8V20M6 70L17 58M8 82L17 76M6 92L17 80M6 112L17 98M6 104V112H13" />
                    <path d="M8 172Q12 162 17 168L12 174M6 212H17M8 220H17V230H8Z" />
                </svg>
            </div>
        </>
    );
}

function DynamicInput() {
    return (
        <div className="absolute left-[1349px] top-[527px] flex items-start gap-1">
            <label htmlFor="dyn-x" className="flex items-center w-[269px] h-[33px] pl-[5px] pb-[2px] bg-[#15145a] border-2 border-[#b9b9a4] text-[#9c9da2] whitespace-nowrap">
                Specify other corner point or
                <svg viewBox="0 0 15 14" width="15" height="14" className="ml-auto mr-1 mt-2">
                    <path d="M0 0H15V14H0Z" fill="#c4c4da" />
                    <path d="M3 11H12M5 11V4H10V11M7 7V11" stroke="#33335e" strokeWidth="2" fill="none" />
                </svg>
            </label>
            <div className="w-[68px] h-[30px] pl-[5px] pt-[2px] bg-[#f8f8f2] border border-[#d2d2b6]">
                <input id="dyn-x" defaultValue="8.2361" className="block w-[50px] h-[23px] bg-[#1272cc] text-[#b9d6f2] outline-none" />
            </div>
            <input aria-label="Y coordinate" defaultValue="-5.5" className="w-20 h-[30px] pl-[5px] bg-[#15145a] border-2 border-[#b9b9a4] text-[#9c9da2]" />
        </div>
    );
}

function LayoutTabs() {
    return (
        <div className="flex h-7 border-t-2 border-[#2c333f] text-[#9a9fa9]">
            <button className="w-[54px] h-6 text-left font-bold text-[#dde0e6] bg-[#3a4150] overflow-hidden [clip-path:polygon(0_0,100%_0,84%_100%,0_100%)]">
                lodel
            </button>
            <button className="w-[90px] h-6 bg-[#2c323e] [clip-path:polygon(0_0,100%_0,92%_100%,8%_100%)]">Layout1</button>
            <button className="w-[94px] h-6 bg-[#2c323e] [clip-path:polygon(4%_0,100%_0,92%_100%,12%_100%)]">Layout2</button>
            <IconButton label="New layout" className="w-[34px] h-6 ml-1 bg-[#2c323e] [clip-path:polygon(14%_0,100%_0,90%_100%,0_100%)]">
                <svg viewBox="0 0 12 12" width="12" height="12" stroke="#b6bac3" strokeWidth="2.500"><path d="M6 0V12M0 6H12" /></svg>
            </IconButton>
        </div>
    );
}

/* ---- Status bar ---- */

const W = '#dde2ea';
const annoBody = <path d="M10 2L13 11L20 20L18 22L11 17H9L2 22L0 20L7 11Z" fill={W} stroke="none" />;

const statusItems: { label: string; width: string; on?: boolean; gap?: boolean; icon: ReactNode }[] = [
    { label: 'Grid', width: 'w-[33px]', on: true, gap: true, icon: <path d="M7 1V23M12 1V23M17 1V23M1 7H23M1 12H23M1 17H23" stroke={W} strokeWidth="1.500" /> },
    { label: 'Snap', width: 'w-[34px]', icon: <path d="M4 5H22M4 12H22M4 19H22" stroke={W} strokeWidth="3" strokeDasharray="3 4" /> },
    { label: 'Snap menu', width: 'w-[22px]', icon: null },
    { label: 'Dynamic Input', width: 'w-[33px]', on: true, gap: true, icon: <><path d="M6 2V14M0 8H12" stroke={W} /><path d="M9 15H23V21H9Z" fill="#fff" stroke="#dce9f6" /><path d="M10 16H12V20H10Z" fill="#4b7bb0" stroke="none" /></> },
    { label: 'Ortho', width: 'w-[34px]', gap: true, icon: <><path d="M2 0V23H23" /><path d="M2 16H8V23" /></> },
    { label: 'Polar', width: 'w-[33px]', on: true, icon: <><path d="M20 8A9.500 9.500 0 1 0 20 17" stroke={W} strokeWidth="1.500" /><path d="M10 13H24M10 13L19 4M16 9V17" stroke={W} /></> },
    { label: 'Polar menu', width: 'w-[22px]', icon: null },
    { label: 'Isometric', width: 'w-[34px]', icon: <><path d="M12 1V23" /><path d="M3 3L20 19" stroke="#8f8990" /><circle cx="12" cy="12" r="2" fill={LINE} /></> },
    { label: 'Isometric menu', width: 'w-[22px]', icon: null },
    { label: 'Snap Tracking', width: 'w-[34px]', icon: <><path d="M16 4L1 21H23" /><circle cx="9" cy="12" r="2.500" fill={W} stroke="none" /></> },
    { label: 'Object Snap', width: 'w-[33px]', on: true, icon: <><path d="M4 4H22V22H4Z" stroke={W} strokeWidth="1.500" /><path d="M1 1H7V7H1Z" fill="#5b8ac0" stroke={W} strokeWidth="1.500" /></> },
    { label: 'Snap options', width: 'w-[22px]', icon: null },
    { label: 'Lineweight', width: 'w-[33px]', on: true, gap: true, icon: <><path d="M1 5H13" stroke="#fff" strokeWidth="3" /><path d="M1 12H13" stroke="#fff" strokeWidth="4" /><path d="M1 19H15" stroke="#fff" strokeWidth="5" /><path d="M13 5H24M13 12H24M15 19H24" stroke="#9cbce0" /></> },
    { label: 'Annotation Visibility', width: 'w-[34px]', gap: true, icon: <>{annoBody}<circle cx="19" cy="5" r="4" /></> },
    { label: 'Auto Scale', width: 'w-[34px]', icon: <>{annoBody}<path d="M19 1L14 8H18L16 13L22 6H19Z" fill={W} stroke="none" /></> },
    { label: 'Annotation', width: 'w-[34px]', icon: <g transform="translate(2 0)">{annoBody}</g> },
];

const gearTeeth = [0, 45, 90, 135, 180, 225, 270, 315];

function StatusBar() {
    return (
        <footer className="flex justify-end h-10 pt-1 border-b-2 border-[#171824] overflow-hidden">
            <div className="flex h-[33px]">
                <button className="w-[68px] bg-[#373e4f] text-[17px] text-[#d5d9e0]">MODEL</button>
                {statusItems.map((s) => (
                    <IconButton
                        key={s.label}
                        label={s.label}
                        className={clsx(s.width, s.gap && 'ml-[3px]', s.on ? 'bg-[#5b8ac0]' : 'bg-[#373e4f]')}
                    >
                        {s.icon ? <Icon>{s.icon}</Icon> : <Caret big />}
                    </IconButton>
                ))}
                <button className="flex items-center justify-center gap-[6px] w-[46px] bg-[#373e4f] text-[#dde2ea]">
                    1:1 <Caret big />
                </button>
                <IconButton label="Workspace" className="w-[34px] ml-[3px] bg-[#373e4f]">
                    <Icon>
                        {gearTeeth.map((a) => <rect key={a} x="10" y="0" width="4" height="6" fill={W} stroke="none" transform={`rotate(${a} 12 12)`} />)}
                        <circle cx="12" cy="12" r="6" stroke={W} strokeWidth="4.500" />
                    </Icon>
                </IconButton>
                <IconButton label="Workspace menu" className="w-[22px] bg-[#373e4f]"><Caret big /></IconButton>
                <IconButton label="Annotation Monitor" className="w-[34px] ml-[2px] bg-[#373e4f]">
                    <Icon><path d="M12 1V23M1 12H23" stroke={W} strokeWidth="2.500" /></Icon>
                </IconButton>
                <IconButton label="Isolate Objects" className="w-[34px] ml-[3px] bg-[#373e4f]">
                    <Icon><path d="M1 1H9V9H1ZM10 14L15 23H5Z" /><circle cx="18" cy="11" r="5" /></Icon>
                </IconButton>
                <IconButton label="Graphics Performance" className="w-[39px] ml-[3px] bg-[#373e4f]">
                    <svg viewBox="0 0 30 28" width="30" height="28" fill="none">
                        <circle cx="17" cy="11" r="9" fill="#3a74bd" />
                        <path d="M7 1V14M1 6H20" stroke="#a9cdf2" strokeWidth="2.500" />
                        <path d="M1 16H11V26H1Z" fill="#f4a936" />
                        <path d="M13 20L18 25L28 15" stroke="#4aa05a" strokeWidth="4" />
                    </svg>
                </IconButton>
                <button aria-label="Clean Screen" className="flex items-center w-[24px] ml-[3px] pl-1 bg-[#373e4f] overflow-hidden">
                    <svg viewBox="0 0 24 18" width="24" height="18" fill="none" stroke={LINE} strokeWidth="1.500" className="shrink-0">
                        <path d="M1 1H23V17H1Z" /><path d="M3 11V15H8ZM16 3H21V8Z" fill={W} stroke="none" />
                    </svg>
                </button>
            </div>
        </footer>
    );
}

export default function App() {
    return (
        <div className="flex flex-col min-h-screen overflow-hidden bg-[#1f2631] font-['Open_Sans',sans-serif] text-base leading-6">
            <Header />
            <Ribbon />
            <FileTabs />
            <main className="relative flex-1 min-h-[700px] overflow-hidden bg-[#212630]">
                <Drawing />
                <p className="relative -ml-1 pt-[5px] text-[#c2c6cd]">op][2D Wireframe]</p>
                <CommandLine />
                <ViewCube />
                <DynamicInput />
            </main>
            <LayoutTabs />
            <StatusBar />
        </div>
    );
}
